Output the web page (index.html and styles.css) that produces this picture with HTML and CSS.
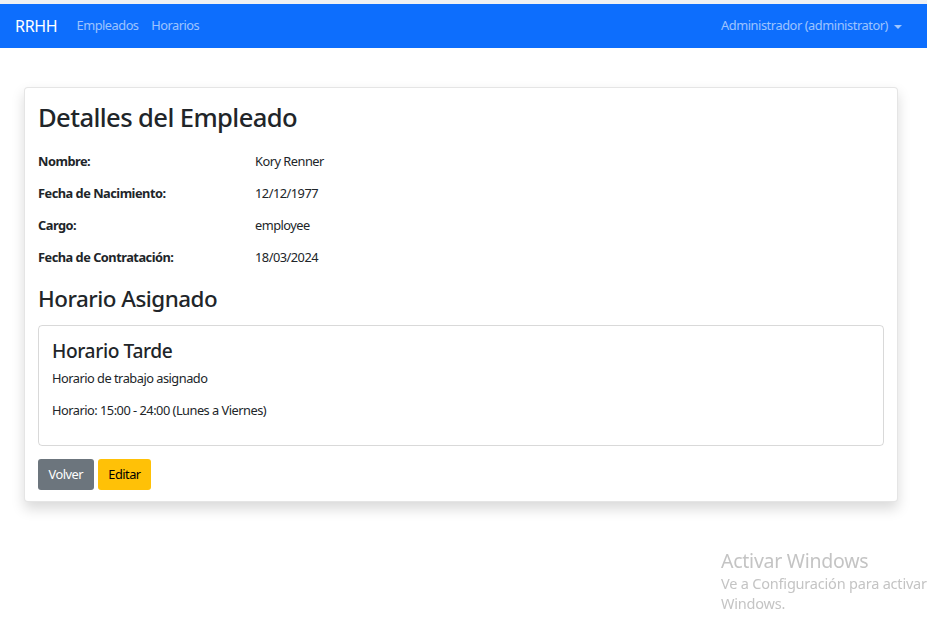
FILE: index.html
```html
<!DOCTYPE html>
<html lang="es">
<head>
<meta charset="utf-8">
<title>Detalles del Empleado</title>
<link rel="stylesheet" href="styles.css">
</head>
<body>
<div class="topstrip"></div>
<nav class="navbar">
  <div class="nav-left">
    <a class="brand" href="#">RRHH</a>
    <a class="nav-link" href="#">Empleados</a>
    <a class="nav-link" href="#">Horarios</a>
  </div>
  <div class="nav-right">
    <a class="nav-link user" href="#">Administrador (administrator)<span class="caret"></span></a>
  </div>
</nav>
<main class="container">
  <section class="card">
    <h2 class="title">Detalles del Empleado</h2>
    <div class="details">
      <div class="label">Nombre:</div><div class="value">Kory Renner</div>
      <div class="label">Fecha de Nacimiento:</div><div class="value">12/12/1977</div>
      <div class="label">Cargo:</div><div class="value">employee</div>
      <div class="label">Fecha de Contratación:</div><div class="value">18/03/2024</div>
    </div>
    <h3 class="subtitle">Horario Asignado</h3>
    <div class="inner-card">
      <h4 class="card-title">Horario Tarde</h4>
      <p class="text">Horario de trabajo asignado</p>
      <p class="text">Horario: 15:00 - 24:00 (Lunes a Viernes)</p>
    </div>
    <div class="actions">
      <a class="btn btn-secondary" href="#">Volver</a>
      <a class="btn btn-warning" href="#">Editar</a>
    </div>
  </section>
</main>
<div class="watermark">
  <div class="wm-title">Activar Windows</div>
  <div class="wm-text">Ve a Configuración para activar<br>Windows.</div>
</div>
</body>
</html>
```
FILE: styles.css
```css
html {
  overflow: hidden;
  background: #fff;
}
body {
  margin: 0;
  padding: 0;
  min-height: 627px;
  font-family: "Noto Sans", "Open Sans", sans-serif;
  color: #212529;
  font-size: 12.8px;
  line-height: 1.5;
}
a { text-decoration: none; }
.topstrip {
  height: 4px;
  background: #eff0f3;
}
.navbar {
  height: 44px;
  background: #0d6efd;
  display: flex;
  align-items: center;
  justify-content: space-between;
  padding: 0 25px 0 15px;
}
.nav-left, .nav-right {
  display: flex;
  align-items: center;
}
.brand {
  color: #fff;
  font-size: 16px;
  margin-right: 12.8px;
  letter-spacing: -0.3px;
}
.nav-link {
  color: rgba(255,255,255,0.6);
  padding: 0 6.4px;
  font-size: 12.8px;
  letter-spacing: -0.5px;
}
.user {
  display: flex;
  align-items: center;
  padding-right: 0;
  letter-spacing: -0.43px;
}
.caret {
  display: inline-block;
  margin-left: 6px;
  border-top: 4px solid rgba(255,255,255,0.6);
  border-left: 4px solid transparent;
  border-right: 4px solid transparent;
  margin-top: 1px;
}
.container {
  padding: 39px 29px 40px 24px;
}
.card {
  border: 1px solid rgba(0,0,0,0.1);
  border-radius: 4px;
  box-shadow: 0 6.4px 12.8px rgba(0,0,0,0.15);
  padding: 15px 13px 10.8px 13px;
  background: #fff;
}
.title {
  font-size: 25.6px;
  font-weight: 500;
  line-height: 1.2;
  margin: 0 0 18.2px 0;
  letter-spacing: -0.6px;
}
.details {
  display: grid;
  grid-template-columns: 217px 1fr;
  row-gap: 12.8px;
  line-height: 19.2px;
  letter-spacing: -0.5px;
}
.label { font-weight: 700; }
.subtitle {
  font-size: 22.4px;
  font-weight: 500;
  line-height: 1.2;
  margin: 19px 0 11.8px 0;
  letter-spacing: -0.5px;
}
.inner-card {
  border: 1px solid rgba(0,0,0,0.15);
  border-radius: 4px;
  padding: 12.8px 13px 24.8px 13px;
  margin-bottom: 13.5px;
}
.card-title {
  font-size: 19.2px;
  font-weight: 500;
  line-height: 1.2;
  margin: 0 0 7.4px 0;
  letter-spacing: -0.4px;
}
.text {
  margin: 0 0 12.8px 0;
  letter-spacing: -0.5px;
}
.text:last-child { margin-bottom: 0; }
.actions {
  display: flex;
  gap: 4px;
}
.btn {
  display: inline-block;
  padding: 4.8px 9.6px;
  border-radius: 3px;
  font-size: 12.8px;
  line-height: 19.2px;
  border: 1px solid transparent;
  letter-spacing: -0.5px;
}
.btn-secondary { background: #6c757d; color: #fff; }
.btn-warning { background: #ffc107; color: #000; }
.watermark {
  position: fixed;
  left: 721px;
  top: 548px;
  color: #c4c4c4;
  white-space: nowrap;
}
.wm-title {
  font-size: 19.5px;
  line-height: 26px;
  letter-spacing: -0.25px;
}
.wm-text {
  font-size: 14.5px;
  line-height: 20px;
  margin-top: -1.5px;
  letter-spacing: -0.2px;
}
```
